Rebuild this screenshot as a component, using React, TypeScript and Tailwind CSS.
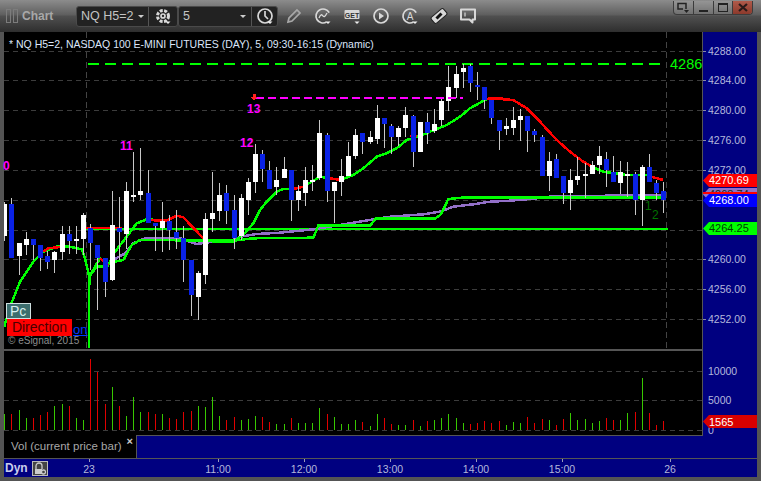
import type { ReactNode } from "react";

type Pt = [number, number];
type Candle = [string, number, number, number, number];

// [colour, body top, body bottom, wick top, wick bottom], all in page pixels
const candles: Candle[] = [
  ["w", 204, 236, 202, 241], ["b", 204, 258, 198, 258], ["w", 243, 256, 243, 275], ["w", 239, 245, 232, 255],
  ["b", 239, 245, 239, 260], ["b", 245, 258, 245, 271], ["b", 256, 262, 251, 269], ["w", 252, 260, 251, 273],
  ["w", 234, 252, 226, 260], ["b", 234, 241, 226, 254], ["w", 239, 241, 226, 254], ["w", 215, 239, 213, 255],
  ["b", 228, 243, 224, 270], ["b", 245, 258, 245, 310], ["b", 258, 282, 258, 297], ["w", 225, 280, 191, 281],
  ["b", 228, 232, 197, 260], ["w", 191, 234, 182, 249], ["w", 195, 197, 152, 202], ["w", 191, 195, 148, 200],
  ["b", 193, 223, 170, 223], ["b", 223, 226, 223, 251], ["w", 221, 228, 202, 252], ["b", 221, 230, 215, 250],
  ["b", 232, 238, 210, 249], ["b", 238, 260, 226, 282], ["b", 260, 295, 260, 316], ["w", 273, 297, 271, 320],
  ["w", 219, 275, 213, 284], ["w", 213, 219, 172, 232], ["w", 195, 211, 183, 221], ["b", 193, 211, 185, 224],
  ["b", 210, 238, 195, 249], ["w", 198, 236, 194, 240], ["w", 182, 200, 178, 215], ["w", 154, 182, 144, 193],
  ["b", 154, 169, 150, 182], ["b", 170, 189, 161, 189], ["w", 180, 187, 167, 195], ["w", 169, 178, 157, 178],
  ["b", 170, 200, 170, 221], ["w", 191, 200, 185, 211], ["w", 180, 193, 167, 206], ["w", 180, 182, 165, 191],
  ["w", 133, 178, 120, 180], ["b", 135, 191, 133, 202], ["w", 182, 191, 182, 223], ["w", 176, 182, 159, 196],
  ["w", 156, 176, 142, 176], ["w", 135, 156, 129, 159], ["b", 133, 142, 133, 154], ["w", 137, 142, 131, 144],
  ["w", 118, 139, 105, 144], ["b", 118, 124, 118, 148], ["b", 126, 137, 124, 154], ["w", 128, 137, 126, 146],
  ["w", 115, 128, 107, 137], ["b", 116, 152, 115, 167], ["w", 122, 152, 122, 152], ["b", 122, 133, 113, 144],
  ["w", 124, 131, 109, 133], ["w", 101, 120, 98, 126], ["w", 87, 101, 66, 111], ["w", 74, 88, 66, 98],
  ["w", 68, 72, 64, 88], ["b", 66, 83, 64, 92], ["b", 85, 87, 72, 100], ["b", 87, 100, 87, 109],
  ["b", 100, 118, 100, 124], ["b", 120, 131, 120, 150], ["w", 126, 129, 118, 135], ["w", 120, 128, 107, 135],
  ["w", 116, 120, 109, 141], ["b", 116, 131, 116, 152], ["b", 131, 135, 129, 142], ["b", 137, 176, 135, 176],
  ["w", 161, 176, 152, 191], ["b", 159, 178, 154, 178], ["b", 176, 193, 176, 204], ["w", 180, 193, 169, 210],
  ["w", 176, 180, 157, 185], ["w", 174, 176, 163, 198], ["w", 165, 174, 161, 174], ["w", 156, 165, 146, 174],
  ["b", 159, 170, 152, 187], ["b", 172, 182, 156, 182], ["w", 172, 183, 161, 194], ["w", 174, 176, 162, 197],
  ["b", 174, 200, 172, 215], ["w", 167, 200, 165, 226], ["b", 167, 182, 154, 182], ["b", 183, 193, 180, 200],
  ["b", 191, 200, 182, 213],
];

// top of each volume bar; r/g is the bar colour
const volumes: [string, number][] = [
  ["g", 414], ["r", 414], ["g", 410], ["g", 418], ["r", 418], ["r", 415], ["r", 412], ["g", 406], ["g", 404], ["r", 406],
  ["g", 418], ["g", 420], ["r", 359], ["r", 372], ["r", 404], ["g", 387], ["r", 406], ["g", 416], ["g", 397], ["g", 412],
  ["r", 412], ["r", 414], ["g", 414], ["r", 418], ["r", 419], ["r", 412], ["r", 411], ["g", 406], ["g", 407], ["g", 397],
  ["g", 416], ["r", 420], ["r", 417], ["g", 420], ["g", 419], ["g", 416], ["r", 417], ["r", 422], ["g", 424], ["g", 424],
  ["r", 418], ["g", 423], ["g", 423], ["g", 423], ["g", 408], ["r", 414], ["g", 417], ["g", 424], ["g", 424], ["g", 420],
  ["r", 422], ["g", 426], ["g", 414], ["r", 418], ["r", 424], ["g", 425], ["g", 425], ["r", 420], ["g", 426], ["r", 421],
  ["g", 420], ["g", 418], ["g", 414], ["g", 418], ["g", 423], ["r", 424], ["r", 423], ["r", 421], ["r", 423], ["r", 421],
  ["g", 425], ["g", 422], ["g", 423], ["r", 417], ["r", 423], ["r", 419], ["g", 420], ["r", 425], ["r", 419], ["g", 413],
  ["g", 420], ["g", 419], ["g", 423], ["g", 421], ["r", 418], ["r", 420], ["g", 420], ["g", 413], ["r", 412], ["g", 378],
  ["r", 413], ["r", 425], ["r", 421],
];

const barX = (i: number) => Math.round(4.3 + 7.163 * i) + 0.5;

const pts = (ox: number, oy: number, list: Pt[]) =>
  list.map(([x, y]) => `${(ox + x / 3).toFixed(1)},${(oy + y / 3).toFixed(1)}`).join(" ");

const fastMa =
  pts(0, 130, [[13, 590], [30, 530], [60, 455], [100, 395], [130, 365], [170, 350], [210, 350], [245, 358], [255, 385], [268, 440], [285, 410], [300, 385], [325, 405], [335, 385], [345, 365], [380, 320], [410, 280], [440, 268], [500, 272], [530, 257], [550, 262], [610, 325], [640, 335], [700, 335], [730, 315], [760, 280]]) +
  " " +
  pts(240, 60, [[60, 450], [80, 425], [110, 395], [130, 387], [160, 387], [190, 380], [210, 368], [240, 350], [270, 355], [300, 360], [340, 345], [370, 325], [410, 290], [440, 280], [470, 265], [500, 240], [540, 228], [570, 215], [620, 195], [660, 170], [690, 145], [740, 117]]) +
  " " +
  pts(500, 90, [[0, 27], [40, 30], [80, 55], [120, 95], [170, 150], [210, 185], [250, 215], [280, 232], [310, 245], [380, 255], [440, 255], [460, 262], [490, 270]]);

const redSegments = [
  pts(0, 130, [[130, 365], [145, 355], [190, 350]]),
  pts(0, 130, [[300, 385], [325, 405]]),
  pts(0, 130, [[440, 270], [500, 272], [530, 257], [550, 262], [610, 325]]),
  pts(240, 60, [[160, 387], [190, 380]]),
  pts(240, 60, [[270, 355], [300, 360]]),
  pts(240, 60, [[510, 228], [530, 228]]),
  pts(240, 60, [[740, 117], [750, 115], [810, 117]]),
  pts(500, 90, [[0, 27], [40, 30], [80, 55], [120, 95], [170, 150], [210, 185], [250, 215], [280, 232]]),
  pts(500, 90, [[440, 258], [460, 262], [490, 270]]),
];

const purpleLine =
  pts(0, 130, [[340, 390], [375, 370], [400, 340], [435, 325], [540, 325], [590, 342], [640, 335], [700, 330]]) +
  " " +
  pts(240, 60, [[0, 530], [50, 522], [120, 518], [220, 508], [300, 495], [400, 478], [450, 470], [550, 463], [600, 455], [640, 440], [700, 433], [750, 425], [810, 422]]) +
  " " +
  pts(500, 90, [[90, 327], [150, 320], [270, 320], [350, 315], [490, 315]]);

const stepLine =
  pts(0, 130, [[267, 655], [268, 440], [290, 410], [310, 410]]) +
  " " +
  pts(0, 130, [[345, 395], [370, 390], [395, 345], [420, 330], [700, 332]]) +
  " " +
  pts(240, 60, [[40, 535], [220, 533], [235, 497], [390, 497], [407, 476], [585, 476], [603, 463], [625, 417], [665, 413], [810, 413]]) +
  " " +
  pts(500, 90, [[0, 323], [490, 323]]);

const gridY = [51.5, 80.5, 110.5, 140.5, 170.5, 200.5, 230.5, 259.5, 289.5, 319.5];
// 4268.00 and 4264.00 sit under the price flags, so they are not listed
const priceLabels = [
  ["4288.00", 51], ["4284.00", 80], ["4280.00", 110], ["4276.00", 140], ["4272.00", 170],
  ["4260.00", 259], ["4256.00", 289], ["4252.00", 319],
] as const;

function PriceChart() {
  return (
    <svg viewBox="4 32 698 317" shapeRendering="crispEdges" className="block h-full w-full">
      {gridY.map((y) => (
        <line key={y} x1={4} x2={702} y1={y} y2={y} stroke="#3c3c3c" strokeDasharray="5 4" />
      ))}
      <line x1={86.5} x2={86.5} y1={32} y2={349} stroke="#444" strokeDasharray="6 4" />
      <line x1={666.5} x2={666.5} y1={32} y2={349} stroke="#444" strokeDasharray="6 4" />

      <line x1={88} x2={663} y1={63.5} y2={63.5} stroke="#00ff00" strokeWidth={2} strokeDasharray="11 6" />
      <line x1={85} x2={668} y1={228.5} y2={228.5} stroke="#00ff00" strokeWidth={2} />
      <line x1={85} x2={122} y1={228} y2={228} stroke="#ff0000" strokeWidth={2} />
      <line x1={185} x2={204} y1={240} y2={240} stroke="#ff0000" strokeWidth={2} />

      <polyline points={purpleLine} fill="none" stroke="#9370c8" strokeWidth={2.5} />
      <polyline points={stepLine} fill="none" stroke="#00ff00" strokeWidth={2.5} />
      <polyline points={fastMa} fill="none" stroke="#00ff00" strokeWidth={2.5} />
      {redSegments.map((s) => (
        <polyline key={s} points={s} fill="none" stroke="#ff0000" strokeWidth={2.5} />
      ))}

      {candles.map(([c, top, bottom, hi, lo], i) => {
        const x = barX(i);
        return (
          <g key={i}>
            <line x1={x} x2={x} y1={hi} y2={lo} stroke="#c8c8c8" />
            <rect x={x - 2.5} y={top} width={5} height={Math.max(bottom - top, 2)} fill={c === "w" ? "#ffffff" : "#0a22e6"} />
          </g>
        );
      })}

      <line x1={256} x2={463} y1={97.5} y2={97.5} stroke="#ff00ff" strokeWidth={2} strokeDasharray="8 4" />
      <path d="M252.500 94h3v3h2l-3.500 4-3.500-4h2z" fill="#ff2020" />
    </svg>
  );
}

function PriceAxis() {
  return (
    <svg viewBox="703 32 54 317" className="block h-full w-full">
      {priceLabels.map(([label, y]) => (
        <g key={label}>
          <line x1={703} x2={706} y1={y + 0.5} y2={y + 0.5} stroke="#8a8aa8" />
          <text x={708} y={y + 4} fontSize={10.5} fill="#b4b8dc" className="font-['Liberation_Sans',sans-serif]">
            {label}
          </text>
        </g>
      ))}
    </svg>
  );
}

function PriceFlag({ label, className }: { label: string; className: string }) {
  return (
    <div
      className={`absolute left-0 flex h-[13px] w-[54px] items-center overflow-hidden pl-[6px] text-[11px] [clip-path:polygon(0_50%,6px_0,100%_0,100%_100%,6px_100%)] ${className}`}
    >
      {label}
    </div>
  );
}

function VolumeChart() {
  return (
    <svg viewBox="4 351 698 84" shapeRendering="crispEdges" className="block h-full w-full">
      {[371.5, 400.5, 430.5].map((y) => (
        <line key={y} x1={4} x2={702} y1={y} y2={y} stroke="#3c3c3c" strokeDasharray="5 4" />
      ))}
      {volumes.map(([c, top], i) => (
        <line key={i} x1={barX(i)} x2={barX(i)} y1={top} y2={430} stroke={c === "r" ? "#e00000" : "#38c800"} />
      ))}
    </svg>
  );
}

function ToolIcon({ children }: { children: ReactNode }) {
  return (
    <svg width={18} height={18} viewBox="0 0 18 18" fill="none" stroke="#d8d8d8" strokeWidth={1.7} className="shrink-0">
      {children}
    </svg>
  );
}

const caret = <path d="M11.500 14.500h5l-2.500 2.500z" fill="#eee" stroke="none" />;

export default function App() {
  return (
    <div className="flex h-[481px] w-[761px] flex-col overflow-hidden bg-[#545454] font-['Liberation_Sans',sans-serif]">
      {/* title bar + toolbar */}
      <div className="relative flex h-8 shrink-0 items-center bg-[linear-gradient(#8c8c8c_0,#5e5e5e_15px,#505050_16px,#2e2e2e_32px)] pl-[6px]">
        <div className="flex gap-[2px]">
          <div className="h-[14px] w-[5px] border border-[#7c7c7c]" />
          <div className="h-[14px] w-[5px] border border-[#7c7c7c]" />
        </div>
        <span className="ml-[4px] w-[54px] text-[12px] font-bold text-[#a8a8a8]">Chart</span>

        <div className="flex h-[21px] items-stretch rounded-[3px] border border-[#4a4a4a] bg-[#222]">
          <div className="flex w-[72px] items-center justify-between border-r border-[#555] pr-[4px] pl-[4px] text-[12.5px] text-[#c4c4c4]">
            <span>NQ H5=2</span>
            <span className="h-0 w-0 border-x-[3px] border-t-[3px] border-x-transparent border-t-[#ccc]" />
          </div>
          <div className="flex w-[28px] items-center justify-center">
            <ToolIcon>
              <circle cx={9} cy={9} r={5.5} strokeWidth={3} strokeDasharray="3 1.400" />
              <circle cx={9} cy={9} r={2} />
              {caret}
            </ToolIcon>
          </div>
        </div>
        <div className="flex h-[21px] items-stretch rounded-[3px] border border-[#4a4a4a] bg-[#222]">
          <div className="flex w-[73px] items-center justify-between border-r border-[#555] pr-[5px] pl-[4px] text-[12.5px] text-[#c4c4c4]">
            <span>5</span>
            <span className="h-0 w-0 border-x-[3px] border-t-[3px] border-x-transparent border-t-[#ccc]" />
          </div>
          <div className="flex w-[25px] items-center justify-center">
            <ToolIcon>
              <circle cx={9} cy={9} r={7} />
              <path d="M9 4v5l3 3" />
              {caret}
            </ToolIcon>
          </div>
        </div>

        <div className="ml-[7px] flex gap-[11px]">
          <ToolIcon>
            <g stroke="#a8a8a8">
              <path d="M3 15l1-4 8-8 3 3-8 8z" />
            </g>
          </ToolIcon>
          <ToolIcon>
            <circle cx={9} cy={9} r={7} strokeDasharray="33 11" transform="rotate(60 9 9)" />
            <path d="M5 11c2-5 3-3 4-2s2 1 4-3" strokeWidth={1.300} />
            {caret}
          </ToolIcon>
          <ToolIcon>
            <rect x={1.500} y={3} width={15} height={9} rx={1} fill="#d8d8d8" stroke="none" />
            <text x={9} y={10.500} textAnchor="middle" fontSize={7} fontWeight={700} fill="#333" stroke="none">
              GET
            </text>
            {caret}
          </ToolIcon>
          <ToolIcon>
            <circle cx={9} cy={9} r={7} />
            <path d="M7 5.500l5 3.500-5 3.500z" fill="#d8d8d8" stroke="none" />
          </ToolIcon>
          <ToolIcon>
            <circle cx={9} cy={9} r={7} strokeDasharray="33 11" transform="rotate(60 9 9)" />
            <text x={9} y={12.500} textAnchor="middle" fontSize={10} fill="#d8d8d8" stroke="none">
              A
            </text>
            {caret}
          </ToolIcon>
          <ToolIcon>
            <rect x={1} y={5} width={16} height={8} rx={2} transform="rotate(-40 9 9)" fill="#d8d8d8" stroke="#222" strokeWidth={1} />
            <path d="M6.500 11.500l5-5" stroke="#111" strokeWidth={3} />
          </ToolIcon>
          <ToolIcon>
            <path d="M2 2.500h14v10h-2.500v3l-3-3H2z" strokeWidth={2} strokeLinejoin="round" />
            <path d="M6 5.500v4" strokeWidth={1.200} />
          </ToolIcon>
        </div>

        {/* window buttons */}
        <div className="absolute top-px left-[673px] flex h-[14px] w-[80px] overflow-hidden rounded-b-[4px] border border-t-0 border-[#3c3c3c] bg-white/10">
          <div className="flex flex-1 items-center justify-center border-r border-[#3c3c3c]">
            <svg width={12} height={11} viewBox="0 0 12 11" fill="none" stroke="#222" strokeWidth={1.500}>
              <path d="M9 7V1.500H1V7h5" />
              <path d="M7 8h5l-2.500 3z" fill="#222" stroke="none" />
            </svg>
          </div>
          <div className="flex flex-1 items-end justify-center border-r border-[#3c3c3c] pb-[2px]">
            <div className="h-[2px] w-[9px] bg-[#222]" />
          </div>
          <div className="flex flex-1 items-center justify-center border-r border-[#3c3c3c]">
            <div className="h-[9px] w-[10px] border border-t-2 border-[#222]" />
          </div>
          <div className="flex flex-1 items-center justify-center bg-[linear-gradient(#b05a4a,#8c3a2c)]">
            <svg width={10} height={9} viewBox="0 0 10 9" stroke="#2a1a18" strokeWidth={2.200}>
              <path d="M1 1l8 7M9 1L1 8" />
            </svg>
          </div>
        </div>
      </div>

      {/* panes */}
      <div className="flex flex-1 flex-col pr-1 pb-1 pl-1">
        <div className="flex h-[317px] shrink-0">
          <div className="relative w-[699px] border-r border-[#555] bg-black">
            <PriceChart />
            <span className="absolute top-[5px] left-[5px] text-[10.5px] whitespace-nowrap text-[#dce6fa]">
              * NQ H5=2, NASDAQ 100 E-MINI FUTURES (DAY), 5, 09:30-16:15 (Dynamic)
            </span>
            <span className="absolute top-[23px] left-[666px] text-[14.5px] leading-[18px] text-[#00ff00]">4286</span>
            <span className="absolute top-[127px] left-[-1px] text-[12px] leading-[14px] font-bold text-[#ff00ff]">0</span>
            <span className="absolute top-[107px] left-[116px] text-[12px] leading-[14px] font-bold text-[#ff00ff]">11</span>
            <span className="absolute top-[104px] left-[236px] text-[12px] leading-[14px] font-bold text-[#ff00ff]">12</span>
            <span className="absolute top-[70px] left-[243px] text-[12px] leading-[14px] font-bold text-[#ff00ff]">13</span>
            <span className="absolute top-[167px] left-[641px] text-[12px] leading-[14px] text-[#007000]">1</span>
            <span className="absolute top-[176px] left-[648px] text-[12px] leading-[14px] text-[#007000]">2</span>
            <div className="absolute top-[271px] left-[2px] flex h-[16px] w-[25px] items-center border border-[#cfe0e0] bg-[#3c6e6e] pl-[3px] text-[14px] text-[#d8f0f0]">
              Pc
            </div>
            <div className="absolute top-[287px] left-[3px] flex h-[17px] w-[65px] items-center justify-center bg-[#ff0000] text-[14px] text-[#4a0000]">
              Direction
            </div>
            <span className="absolute top-[290px] left-[69px] text-[13px] leading-[15px] text-[#0038ff] underline">on</span>
            <span className="absolute top-[303px] left-[4px] text-[10px] leading-[12px] text-[#8c8c8c]">© eSignal, 2015</span>
          </div>
          <div className="relative flex-1 bg-[#000080]">
            <PriceAxis />
            <PriceFlag label="4270.69" className="top-[142px] bg-[#ff0000] text-white" />
            <PriceFlag label="4268.74" className="top-[156px] bg-[#9370c8] text-[#222]" />
            <div className="absolute top-[160px] h-[2px] w-[54px] bg-[#ff0000]" />
            <PriceFlag label="4268.00" className="top-[162px] bg-[#0000ff] text-white" />
            <PriceFlag label="4264.25" className="top-[190px] bg-[#00ff00] text-[#004000]" />
          </div>
        </div>

        <div className="flex h-[86px] shrink-0">
          <div className="w-[699px] border-t-2 border-r border-[#555] bg-black">
            <VolumeChart />
          </div>
          <div className="relative flex-1 bg-[#000080] text-[10.5px] leading-[12px] text-[#b4b8dc]">
            <span className="absolute top-[16px] left-[5px]">10000</span>
            <span className="absolute top-[45px] left-[5px]">5000</span>
            <span className="absolute top-[75px] left-[5px]">0</span>
            <PriceFlag label="1565" className="top-[66px] bg-[#d80000] text-white" />
          </div>
        </div>

        <div className="flex h-[23px] shrink-0">
          <div className="relative flex w-[132px] items-center bg-black pl-[7px] text-[11.5px] text-[#a8a8a8]">
            Vol (current price bar)
            <span className="absolute top-0 right-[3px] text-[11px] leading-[12px] font-bold text-[#cccccc]">×</span>
          </div>
          <div className="flex-1 border-t border-l border-[#555] bg-[#000080]" />
          <div className="w-[54px] bg-[#000080]" />
        </div>

        <div className="relative flex h-[20px] flex-1 items-center gap-[4px] border-t border-[#555] bg-[#000080] pl-px text-[10.5px] text-[#b4b8dc]">
          <span className="text-[12px] font-bold text-[#c8ccec]">Dyn</span>
          <div className="flex h-[15px] w-[16px] items-center justify-center border border-[#bbb] bg-[#444]">
            <svg width={12} height={13} viewBox="0 0 12 13" fill="none" stroke="#ccc" strokeWidth={1.300}>
              <path d="M2 7V4a3 3 0 0 1 6 0v3" />
              <rect x={1} y={7} width={7} height={5} fill="#ccc" stroke="none" />
              <circle cx={9.500} cy={10} r={2} />
            </svg>
          </div>
          {[
            ["23", 85],
            ["11:00", 214],
            ["12:00", 300],
            ["13:00", 386],
            ["14:00", 472],
            ["15:00", 558],
            ["26", 666],
          ].map(([label, x]) => (
            <div key={label} className="absolute top-0 h-full" style={{ left: Number(x) }}>
              <div className="h-[3px] w-px bg-[#9a9ab8]" />
              <span className="absolute top-[3px] left-0 -translate-x-1/2 whitespace-nowrap">{label}</span>
            </div>
          ))}
        </div>
      </div>
    </div>
  );
}
